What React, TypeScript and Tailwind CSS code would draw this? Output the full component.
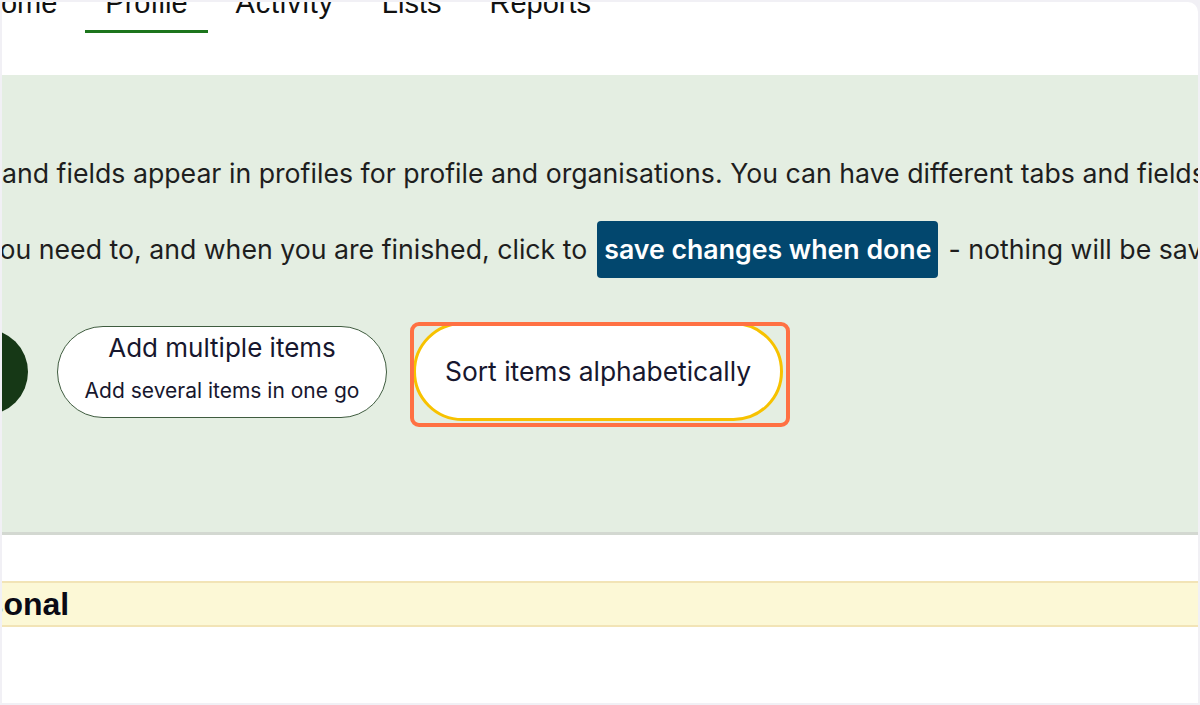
import React from "react";

export default function App() {
  const tabs = ["Home", "Profile", "Activity", "Lists", "Reports"];
  return (
    <div className="w-[1200px] h-[705px] bg-[#f1f0f5] pt-[2px] pl-[2px] overflow-hidden">
      <div className="w-[1196px] h-[701px] bg-white rounded-tr-[10px] overflow-hidden flex flex-col">
        {/* Tabs */}
        <div className="h-[85px] mt-[-12px] flex ml-[-42px] gap-[8px] shrink-0 font-['Liberation_Sans',Arial,sans-serif] text-[29px] text-[#111]">
          {tabs.map((t) => (
            <div key={t} className="flex flex-col">
              <div
                className={
                  t === "Activity"
                    ? "px-5 leading-[26px] whitespace-nowrap tracking-[0.8px]"
                    : "px-5 leading-[26px] whitespace-nowrap"
                }
              >
                {t}
              </div>
              <div
                className={
                  t === "Profile"
                    ? "mt-[14px] h-[3px] bg-[#1c751c]"
                    : "mt-[14px] h-[3px] bg-transparent"
                }
              />
            </div>
          ))}
        </div>

        {/* Green band */}
        <div className="h-[460px] shrink-0 bg-[#e4eee2] border-b-[3px] border-[#d3d8d1] flex flex-col font-['Inter','Noto_Sans',sans-serif] text-[#1e1e1e] text-[26.7px]">
          <div className="mt-[82px] h-[32px] leading-[32px] whitespace-nowrap">
            and fields appear in profiles for profile and organisations. You can have different tabs and fields for each
          </div>
          <div className="mt-[32px] h-[57px] flex items-center whitespace-nowrap ml-[-17px]">
            <span>you need to, and when you are finished, click to</span>
            <span className="ml-[10px] h-[57px] px-[7px] flex items-center bg-[#02476e] text-white font-semibold rounded-[4px]">
              save changes when done
            </span>
            <span className="ml-[10px]">- nothing will be saved until you do</span>
          </div>

          <div className="mt-[44px] flex items-center">
            <div className="ml-[-60px] w-[86px] h-[86px] rounded-full bg-[#163816] shrink-0" />
            <div className="ml-[29px] w-[330px] h-[92px] shrink-0 rounded-full bg-white border-[1.5px] border-[#3f5c3f] flex flex-col items-center justify-start pt-[6px] text-[#17172e]">
              <div className="text-[26px] leading-[30px]">Add multiple items</div>
              <div className="text-[21px] leading-[26px] mt-[15px]">Add several items in one go</div>
            </div>
            <div className="ml-[26px] relative shrink-0">
              <div className="w-[370px] h-[99px] rounded-full bg-white border-[3px] border-[#f7c200] flex items-center justify-center text-[#17172e] text-[26.4px]">
                Sort items alphabetically
              </div>
              <div className="absolute left-[-3px] top-[0px] w-[380px] h-[105px] border-[4px] border-[#ff7143] rounded-[9px]" />
            </div>
          </div>
        </div>

        {/* Bottom */}
        <div className="mt-[46px] h-[46px] shrink-0 bg-[#fcf8d6] border-y-2 border-[#f2e4b6] flex items-center overflow-hidden">
          <span className="ml-[-68px] font-['Liberation_Sans',Arial,sans-serif] font-bold text-[32px] text-[#0a0a14] whitespace-nowrap">
            Personal
          </span>
        </div>
        <div className="flex-1 bg-white" />
      </div>
    </div>
  );
}
